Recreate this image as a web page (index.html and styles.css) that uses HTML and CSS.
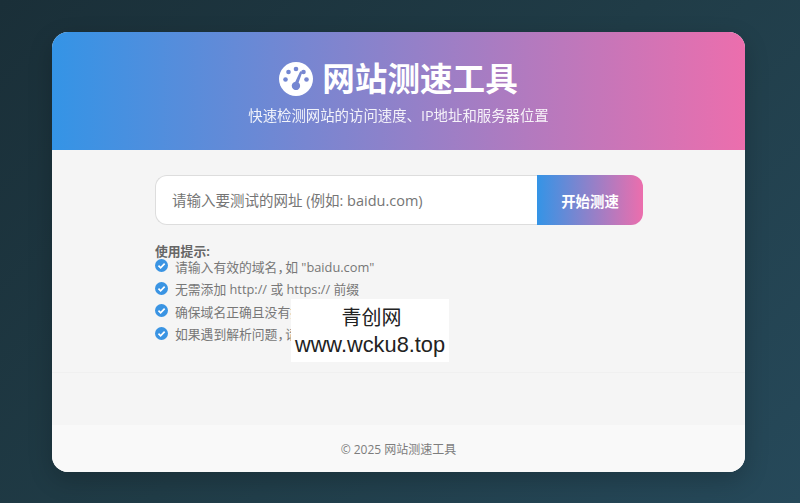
FILE: index.html
```html
<!DOCTYPE html>
<html lang="zh-CN">
<head>
<meta charset="utf-8">
<title>网站测速工具</title>
<link rel="stylesheet" href="styles.css">
</head>
<body>
<div class="card">
  <header class="hero">
    <h1 class="title">
      <svg class="gauge" viewBox="0 0 34 34" aria-hidden="true">
        <defs>
          <mask id="gauge-cut">
            <rect width="34" height="34" fill="#fff"/>
            <circle cx="17" cy="7" r="2.3" fill="#000"/>
            <circle cx="9.5" cy="10" r="2.3" fill="#000"/>
            <circle cx="6.5" cy="17.5" r="2.3" fill="#000"/>
            <circle cx="27.5" cy="17.5" r="2.3" fill="#000"/>
            <circle cx="24.5" cy="10" r="2.3" fill="#000"/>
            <path d="M21.2 9.3 L23.4 10.1 L19.6 20.6 A4.2 4.2 0 1 1 16.3 19.7 Z" fill="#000"/>
          </mask>
        </defs>
        <circle cx="17" cy="17" r="17" fill="#fff" mask="url(#gauge-cut)"/>
      </svg>
      <span>网站测速工具</span>
    </h1>
    <p class="subtitle">快速检测网站的访问速度、IP地址和服务器位置</p>
  </header>
  <main class="tool">
    <form class="search">
      <input class="url" type="text" placeholder="请输入要测试的网址 (例如: baidu.com)">
      <button class="go" type="button">开始测速</button>
    </form>
    <section class="tips">
      <strong class="tips-head">使用提示:</strong>
      <ul class="tips-list">
        <li class="tip"><svg class="check" viewBox="0 0 12 12" aria-hidden="true"><circle cx="6" cy="6" r="6" fill="#3a94e3"/><path d="M3.2 6.2 5.2 8.1 8.9 4.3" fill="none" stroke="#fff" stroke-width="1.6"/></svg><span>请输入有效的域名<span class="comma">，</span>如 "baidu.com"</span></li>
        <li class="tip"><svg class="check" viewBox="0 0 12 12" aria-hidden="true"><circle cx="6" cy="6" r="6" fill="#3a94e3"/><path d="M3.2 6.2 5.2 8.1 8.9 4.3" fill="none" stroke="#fff" stroke-width="1.6"/></svg><span>无需添加 http:// 或 https:// 前缀</span></li>
        <li class="tip"><svg class="check" viewBox="0 0 12 12" aria-hidden="true"><circle cx="6" cy="6" r="6" fill="#3a94e3"/><path d="M3.2 6.2 5.2 8.1 8.9 4.3" fill="none" stroke="#fff" stroke-width="1.6"/></svg><span>确保域名正确且没有拼写错误</span></li>
        <li class="tip"><svg class="check" viewBox="0 0 12 12" aria-hidden="true"><circle cx="6" cy="6" r="6" fill="#3a94e3"/><path d="M3.2 6.2 5.2 8.1 8.9 4.3" fill="none" stroke="#fff" stroke-width="1.6"/></svg><span>如果遇到解析问题<span class="comma">，</span>请稍后重试</span></li>
      </ul>
    </section>
  </main>
  <div class="spacer"></div>
  <footer class="foot">© 2025 网站测速工具</footer>
</div>
<div class="watermark">
  <div class="wm-name">青创网</div>
  <div class="wm-url">www.wcku8.top</div>
</div>
</body>
</html>
```
FILE: styles.css
```css
* { box-sizing: border-box; }
html, body { height: 100%; }
body {
  margin: 0;
  padding: 32px 55px 31px 52px;
  overflow: hidden;
  position: relative;
  background: linear-gradient(135deg, #1a2f38 0%, #203c47 50%, #26495a 100%);
  font-family: "Open Sans", "Noto Sans CJK SC", sans-serif;
}
.card {
  height: 100%;
  display: flex;
  flex-direction: column;
  background: #f5f5f5;
  border-radius: 16px;
  overflow: hidden;
  box-shadow: 0 8px 24px rgba(0, 0, 0, 0.2);
}
.hero {
  height: 118px;
  flex: none;
  display: flex;
  flex-direction: column;
  align-items: center;
  padding-top: 25px;
  color: #fff;
  background: linear-gradient(90deg, #3494e6, #ec6ead);
}
.title {
  margin: 0;
  height: 44px;
  display: flex;
  align-items: center;
  gap: 9px;
  font-size: 32.6px;
  font-weight: 700;
  line-height: 44px;
}
.gauge { width: 34px; height: 34px; flex: none; }
.subtitle {
  margin: 4px 0 0;
  font-size: 14.4px;
  line-height: 22px;
  opacity: 0.9;
}
.tool {
  height: 223px;
  flex: none;
  padding: 25px 102px 0 103px;
  border-bottom: 1px solid #f0f0f0;
}
.search { display: flex; height: 50px; }
.url {
  flex: 1;
  min-width: 0;
  height: 50px;
  padding: 0 16px;
  font: 14.5px "Open Sans", "Noto Sans CJK SC", sans-serif;
  color: #333;
  background: #fff;
  border: 1px solid #ddd;
  border-right: none;
  border-radius: 12px 0 0 12px;
  outline: none;
}
.url::placeholder { color: #757575; opacity: 1; }
.go {
  width: 106px;
  height: 50px;
  flex: none;
  border: none;
  border-radius: 0 12px 12px 0;
  color: #fff;
  font: 700 14.4px "Open Sans", "Noto Sans CJK SC", sans-serif;
  background: linear-gradient(90deg, #3494e6, #ec6ead);
}
.tips {
  margin-top: 18px;
  color: #777;
  font-size: 12.8px;
}
.tips-head {
  display: block;
  color: #666;
  font-size: 12.8px;
  line-height: 16px;
}
.tips-list {
  margin: -3px 0 0;
  padding: 0;
  list-style: none;
  display: flex;
  flex-direction: column;
  gap: 2.5px;
}
.tip {
  height: 20px;
  display: flex;
  align-items: center;
  gap: 7px;
}
.comma { letter-spacing: -5px; }
.check { width: 13px; height: 13px; flex: none; margin-top: -1px; }
.spacer { flex: 1; }
.foot {
  height: 47px;
  flex: none;
  display: flex;
  align-items: center;
  justify-content: center;
  background: #f9f9f9;
  color: #7d7d7d;
  font-size: 12px;
}
.watermark {
  position: absolute;
  left: 291px;
  top: 299px;
  width: 158px;
  height: 63px;
  background: #fff;
  color: #222;
  text-align: center;
  font-family: "Liberation Sans", "Noto Sans CJK SC", sans-serif;
}
.wm-name { font-size: 20px; line-height: 26px; margin-top: 6px; padding-left: 3px; }
.wm-url { font-size: 21.8px; line-height: 28px; }
```
